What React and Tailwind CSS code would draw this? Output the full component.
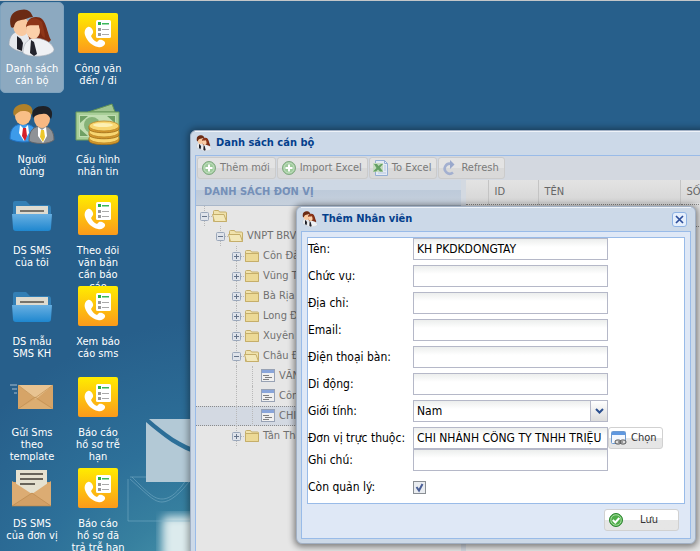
import React from 'react';

const FONT = "font-['DejaVu_Sans_Condensed','Noto_Sans',sans-serif]";

function Couple({ className }) {
  return (
    <svg viewBox="0 0 48 48" className={className} aria-hidden="true">
      <path d="M1 36C1 27 5 23 12 22l11 3 2 17c-9 3-19 0-24-6z" fill="#e6e9ed" stroke="#9aa3ad" strokeWidth=".6" />
      <path d="M9 27l4 3 2 4-1 8-5-2z" fill="#1d1e26" />
      <ellipse cx="13" cy="17" rx="8" ry="10" fill="#f9c9a0" transform="rotate(-8 13 17)" />
      <path d="M3 18C0 8 5 2 12 1c7-2 11 1 13 7-5 0-7 3-12 3-4 1-6 2-7 7-1 1-2 1-3 0z" fill="#6b2b14" />
      <path d="M19 23c-2-9 2-15 9-15 11 0 10 14 15 23l-5 5-16-4z" fill="#7a2a12" />
      <path d="M15 44c0-9 4-13 10-15 11 0 18 4 21 11 1 7-23 10-31 4z" fill="#eff1f4" stroke="#a6adb5" strokeWidth=".6" />
      <ellipse cx="25" cy="21" rx="7" ry="9" fill="#fbd0aa" transform="rotate(-6 25 21)" />
      <path d="M18 18c1-9 9-12 16-5 1 5 3 11 3 16-4-1-5-8-6-13-5 1-9-1-13 2z" fill="#8e3618" />
      <path d="M23 31l3 2 3 12-3 2-4-3z" fill="#24252e" />
    </svg>
  );
}

function Men() {
  return (
    <svg viewBox="0 0 48 42" className="h-[42px] w-12" aria-hidden="true">
      <path d="M2 36c0-12 5-15 14-15s13 5 13 15c-6 4-20 4-27 0z" fill="#3d9bea" stroke="#2273c4" />
      <path d="M12 22l4 4 4-4 1 8-5 8-5-8z" fill="#fff" />
      <path d="M15 25h3l1 8-2 5-3-5z" fill="#d3202a" />
      <ellipse cx="15" cy="13" rx="8" ry="9" fill="#f9bf86" />
      <path d="M6 13C3 5 10 1 16 1c7 0 10 5 8 11-3-4-6-4-9-4-4 0-6 2-9 5z" fill="#b0812a" />
      <path d="M21 38c0-11 5-15 13-15s12 5 12 14c-6 5-20 4-25 1z" fill="#8f9296" stroke="#63666b" />
      <path d="M30 24l4 3 4-3 1 9-4 7-5-7z" fill="#fff" />
      <path d="M33 27h3l1 7-2 5-3-5z" fill="#ecc72b" />
      <ellipse cx="34" cy="16" rx="8" ry="9" fill="#f8b883" />
      <path d="M25 15C22 6 29 3 35 3c8 0 11 6 8 13-3-5-5-6-9-5-4 0-6 1-9 4z" fill="#1f2126" />
    </svg>
  );
}

function Money() {
  return (
    <svg viewBox="0 0 48 42" className="h-[42px] w-12" aria-hidden="true">
      <path d="M14 9L38 1l3 8z" fill="#9fc490" stroke="#5f9156" />
      <path d="M2 9h43v28H2z" fill="#a9cf98" stroke="#69985c" />
      <path d="M5 12h37v22H5z" fill="#c2deb2" />
      <ellipse cx="18" cy="22" rx="8" ry="8" fill="#86b378" />
      <path d="M6 13h8l-8 7zM6 33h8l-8-7zM41 13h-8l8 7z" fill="#6fa064" />
      {[36, 30, 24].map((y) => (
        <g key={y}>
          <path d={`M15 ${y - 1}v3c2 5 28 5 30 0v-3z`} fill="#d69a2d" stroke="#9a6a17" strokeWidth=".8" />
          <ellipse cx="30" cy={y - 1} rx="15" ry="5" fill="#f8d670" stroke="#b98424" strokeWidth=".8" />
        </g>
      ))}
      <ellipse cx="29" cy="22" rx="10" ry="2" fill="#fdf0b3" />
    </svg>
  );
}

function Phone() {
  return (
    <svg viewBox="0 0 40 40" className="size-10" aria-hidden="true">
      <defs>
        <linearGradient id="phoneBg" x1="0" y1="0" x2="0" y2="1">
          <stop offset="0" stopColor="#ffec00" />
          <stop offset="1" stopColor="#fc9a1b" />
        </linearGradient>
      </defs>
      <rect width="40" height="40" rx="2" fill="url(#phoneBg)" />
      <path d="M10 14c-3 1-4 5-3 8 2 6 7 11 13 12 3 1 6-1 7-3 1-3-4-5-6-4l-2 2c-3-1-5-4-6-6l2-3c1-2-2-7-5-6z" fill="#fff" />
      <rect x="18" y="7" width="15" height="18" rx="1.500" fill="#fff" />
      <path d="M20 9h3v3h-3z" fill="#27ae49" />
      <path d="M24 10h7v1.500h-7z" fill="#3bb75a" />
      <path d="M20 15h3v3h-3zM20 20h3v3h-3z" fill="#999" />
      <path d="M24 16h7v1h-7zM24 21h7v1h-7z" fill="#aaa" />
    </svg>
  );
}

function BlueFolder() {
  return (
    <svg viewBox="0 0 40 31" className="h-[31px] w-10" aria-hidden="true">
      <defs>
        <linearGradient id="folderFace" x1="0" y1="0" x2="0" y2="1">
          <stop offset="0" stopColor="#69b0e2" />
          <stop offset="1" stopColor="#1f87cf" />
        </linearGradient>
      </defs>
      <path d="M1 3q0-2 2-2h11l4 4h18q3 0 3 3v14H1z" fill="#337fb5" />
      <path d="M4 6h32v10H4z" fill="#dedbd0" />
      <path d="M8 10h24v2H8z" fill="#77736b" />
      <path d="M0 14h40l-1 14q0 3-3 3H4q-3 0-3-3z" fill="url(#folderFace)" />
    </svg>
  );
}

function SendMail() {
  return (
    <svg viewBox="0 0 44 26" className="h-[26px] w-11" aria-hidden="true">
      <path d="M0 1h7M2 5h5M4 9h3" stroke="#a9bfce" />
      <path d="M8 1h35v24H8z" fill="#dcae72" />
      <path d="M8 1l17 14L8 25z" fill="#d6a467" />
      <path d="M43 1L26 15l17 10z" fill="#d6a467" />
      <path d="M8 1h35L26 15z" fill="#e8c391" />
      <path d="M8 25l17-12 18 12M8 1l17 13L43 1" fill="none" stroke="#c08f52" strokeWidth=".7" />
    </svg>
  );
}

function OpenMail() {
  return (
    <svg viewBox="0 0 40 38" className="h-[38px] w-10" aria-hidden="true">
      <path d="M0 13h39v24H0z" fill="#cf9c62" />
      <path d="M4 1h31v23H4z" fill="#e5e1d0" />
      <path d="M8 5h23M8 10h23M8 15h15" stroke="#3f3b33" strokeWidth="1.400" />
      <path d="M0 12l20 13L0 37z" fill="#dcac73" />
      <path d="M39 12L20 25l19 12z" fill="#dcac73" />
      <path d="M0 37l20-13 19 13z" fill="#d3a066" stroke="#b9864c" strokeWidth=".6" />
    </svg>
  );
}

const shortcuts = [
  ['Danh sách cán bộ', 'couple'],
  ['Công văn đến / đi', 'phone'],
  ['Người dùng', 'men'],
  ['Cấu hình nhắn tin', 'money'],
  ['DS SMS của tôi', 'folder'],
  ['Theo dõi văn bản cần báo cáo', 'phone'],
  ['DS mẫu SMS KH', 'folder'],
  ['Xem báo cáo sms', 'phone'],
  ['Gửi Sms theo template', 'send'],
  ['Báo cáo hồ sơ trễ hạn', 'phone'],
  ['DS SMS của đơn vị', 'open'],
  ['Báo cáo hồ sơ đã trả trễ hạn', 'phone'],
];

const shortcutIcons = {
  couple: <Couple className="size-12" />,
  phone: <Phone />,
  men: <Men />,
  money: <Money />,
  folder: <BlueFolder />,
  send: <SendMail />,
  open: <OpenMail />,
};

function Wallpaper() {
  return (
    <svg className="absolute bottom-0 left-[120px] h-[151px] w-20" viewBox="0 0 80 151" aria-hidden="true">
      <defs>
        <filter id="soft"><feGaussianBlur stdDeviation="5" /></filter>
      </defs>
      <rect x="42" y="116" width="60" height="50" rx="6" fill="#dcebed" filter="url(#soft)" />
      <path d="M8 79v42h72M10 77h70M10 79C28 95 34 102 42 102s18-8 30-24M12 77c16 16 22 22 30 22s16-6 26-22" fill="none" stroke="#82b3cb" strokeOpacity=".5" />
      <path d="M26 22v60h54V55C60 50 42 36 26 22z" fill="#b3c9d6" />
      <path d="M29 19h51v31C62 46 44 32 29 19z" fill="#b3c9d6" />
    </svg>
  );
}

function Add() {
  return (
    <svg viewBox="0 0 16 16" className="size-4" aria-hidden="true">
      <circle cx="8" cy="8" r="6.500" fill="#9fcb9c" stroke="#80a880" />
      <circle cx="8" cy="8" r="5" fill="none" stroke="#c3dfc1" />
      <path d="M8 4.500v7M4.500 8h7" stroke="#fff" strokeWidth="2" />
    </svg>
  );
}

function Excel() {
  return (
    <svg viewBox="0 0 16 16" className="size-4" aria-hidden="true">
      <path d="M2.500.500h9l3 3v12h-12z" fill="#e4eaf4" stroke="#94aed4" />
      <path d="M11.500.500v3h3" fill="none" stroke="#94aed4" />
      <path d="M11 6h2M11 8h2M11 10h2M5 13h8" stroke="#b7c8e0" />
      <path d="M0 3h10v9H0z" fill="#c6dbc0" />
      <path d="M1 4h3l1.500 2L8 4h2L7 7.500l3 4H7L5 9.500 3 11.500H0L3.500 8z" fill="#64a063" />
    </svg>
  );
}

function Refresh() {
  return (
    <svg viewBox="0 0 16 16" className="size-4" aria-hidden="true">
      <path d="M11 12.500A5 5 0 1 1 9.500 4" fill="none" stroke="#a3b0d0" strokeWidth="2.600" />
      <path d="M8 0l4.500 4.500L8 9z" fill="#99a8cc" />
    </svg>
  );
}

function ToolButton({ icon, label }) {
  return (
    <button className="flex h-[22px] items-center gap-[3px] rounded-[3px] border border-[#cbcbcb] bg-linear-to-b from-[#e3e3e3] from-50% to-[#d9d9d9] to-50% pr-[5px] pl-[3px] text-[11px] text-[#7a7a7a]">
      {icon}
      <span>{label}</span>
    </button>
  );
}

function Toggle({ open }) {
  return (
    <svg viewBox="0 0 16 20" className="h-5 w-4 shrink-0" aria-hidden="true">
      <path d="M8.500 0v6M8.500 15v5M13 10.500h3" stroke="#b9b9b9" strokeDasharray="1 1" />
      <rect x="4.500" y="6.500" width="8" height="8" rx="1" fill="#dfe3ea" stroke="#9aa7ba" />
      <path d={open ? 'M6 10.500h5' : 'M6 10.500h5M8.500 8v5'} stroke="#66748a" />
    </svg>
  );
}

function TreeFolder({ open }) {
  return (
    <svg viewBox="0 0 16 16" className="size-4 shrink-0" aria-hidden="true">
      <path d="M1.500 13.500v-10q0-1 1-1h4l1 1.500h6q1 0 1 1v8.500z" fill="#f0e2ac" stroke="#c5ae6a" />
      {open
        ? <path d="M2.500 13.500l-2-7h11.500l2.500 7z" fill="#f3e8b9" stroke="#c5ae6a" />
        : <path d="M1.500 5.500h13v8h-13z" fill="#ecd996" stroke="#c5ae6a" />}
    </svg>
  );
}

function Leaf() {
  return (
    <svg viewBox="0 0 16 14" className="h-3.5 w-4 shrink-0" aria-hidden="true">
      <rect x="1.500" y=".500" width="13" height="12" fill="#f0f0f0" stroke="#98a2b4" />
      <path d="M2 1h12v3H2z" fill="#89a5da" />
      <path d="M3 6.500h6M5 8.500h7M3 10.500h6" stroke="#808080" />
    </svg>
  );
}

const Guide = () => <span className="ml-2 h-5 w-2 shrink-0 border-l border-dotted border-[#b9b9b9]" />;

const tree = [
  { depth: 0, label: '', open: true },
  { depth: 1, label: 'VNPT BRVT', open: true },
  { depth: 2, label: 'Côn Đảo' },
  { depth: 2, label: 'Vũng Tàu' },
  { depth: 2, label: 'Bà Rịa' },
  { depth: 2, label: 'Long Điền' },
  { depth: 2, label: 'Xuyên Mộc' },
  { depth: 2, label: 'Châu Đức', open: true },
  { depth: 3, label: 'VĂN PHÒNG', leaf: true },
  { depth: 3, label: 'Công ty', leaf: true },
  { depth: 3, label: 'CHI NHÁNH', leaf: true, selected: true },
  { depth: 2, label: 'Tân Thành' },
];

function TreeRow({ depth, label, open, leaf, selected }) {
  return (
    <li className={`flex h-5 items-center text-[11px] whitespace-nowrap text-[#707070] ${selected ? 'border-y border-dotted border-[#8b8b8b] bg-[#d3d9e2]' : ''}`}>
      {depth > 0 && <span className="w-4 shrink-0" />}
      {depth > 1 && <span className="w-4 shrink-0" />}
      {leaf ? (
        <>
          <Guide />
          <Guide />
          <Leaf />
        </>
      ) : (
        <>
          <Toggle open={open} />
          <TreeFolder open={open} />
        </>
      )}
      <span className="pl-[3px]">{label}</span>
    </li>
  );
}

function StaffWindow() {
  return (
    <section className="absolute top-[129px] -right-2 -bottom-2 left-[190px] flex flex-col rounded-md border border-[#a2b1c5] bg-[#ccd9e8] pl-1 shadow-[0_0_6px_2px_rgba(0,0,0,0.35)]">
      <header className="flex h-6 shrink-0 items-center gap-1 border-t border-[#eef3f9] pb-px pl-px">
        <Couple className="size-4" />
        <h1 className="text-[11px] font-bold text-[#04408c]">Danh sách cán bộ</h1>
      </header>
      <div className="flex flex-1 flex-col border-t border-l border-[#99bbe8] bg-[#e6e6e6]">
        <div className="flex h-6 shrink-0 items-center gap-px bg-[#d3d8e0] pl-px">
          <ToolButton icon={<Add />} label="Thêm mới" />
          <ToolButton icon={<Add />} label="Import Excel" />
          <ToolButton icon={<Excel />} label="To Excel" />
          <ToolButton icon={<Refresh />} label="Refresh" />
        </div>
        <div className="flex flex-1">
          <div className="w-[265px] shrink-0">
            <h2 className="flex h-[26px] items-center border-b border-[#a9b7c9] bg-linear-to-b from-[#ced8e4] from-40% via-[#bdcada] via-40% to-[#c6d0dc] pl-2 text-[11px] font-bold text-[#7590b8]">DANH SÁCH ĐƠN VỊ</h2>
            <ul>
              {tree.map((row) => <TreeRow key={row.label} {...row} />)}
            </ul>
          </div>
          <div className="w-[5px] shrink-0 bg-[#d3d9e1]" />
          <div className="flex-1">
            <table className="w-full table-fixed border-collapse text-left text-[11px] text-[#666]">
              <thead>
                <tr className="h-6 border-b border-dotted border-[#888] bg-linear-to-b from-[#e3e3e3] to-[#d6d6d6]">
                  <th className="w-[22px] border-r border-[#c4c4c4]" />
                  <th className="w-[50px] border-r border-[#c4c4c4] pl-1.5 font-normal">ID</th>
                  <th className="w-[142px] border-r border-[#c4c4c4] pl-1.5 font-normal">TÊN</th>
                  <th className="overflow-hidden pl-1.5 font-normal whitespace-nowrap">SỐ</th>
                </tr>
              </thead>
              <tbody>
                <tr className="h-[22px] border-b border-dotted border-[#888]">
                  <td /><td /><td /><td />
                </tr>
              </tbody>
            </table>
          </div>
        </div>
      </div>
    </section>
  );
}

const field = 'h-[22px] w-[195px] border border-[#b5b8c8] bg-white bg-linear-to-b from-[#eceeed] to-white to-40% px-[3px] text-[12px] text-black';

function Row({ id, label, children, tight }) {
  return (
    <div className={`flex h-[22px] items-center ${tight ? '' : 'mb-[5px]'}`}>
      <label htmlFor={id} className="w-[105px] shrink-0 whitespace-nowrap">{label}</label>
      {children}
    </div>
  );
}

function EmployeeDialog() {
  return (
    <section role="dialog" aria-labelledby="dialog-title" className="absolute top-[205px] left-[296px] w-[400px] rounded-md border border-[#a2b1c5] bg-[#ccd9e8] px-1 pb-1 shadow-[0_1px_6px_2px_rgba(0,0,0,0.45)]">
      <header className="flex h-6 items-center gap-1 border-t border-[#eef3f9] pr-1 pb-px pl-px">
        <Couple className="size-4" />
        <h2 id="dialog-title" className="flex-1 text-[11px] font-bold text-[#04408c]">Thêm Nhân viên</h2>
        <button aria-label="Đóng" className="flex size-[15px] items-center justify-center rounded-[3px] border border-[#8fb3e3] bg-[#e5effc]">
          <svg viewBox="0 0 9 9" className="size-[9px]" aria-hidden="true"><path d="M1 1l7 7M8 1L1 8" stroke="#2e4f9b" strokeWidth="1.700" /></svg>
        </button>
      </header>
      <form className="border border-[#99bbe8] bg-[#dfe8f6] p-[5px]" onSubmit={(e) => e.preventDefault()}>
        <div className="h-[267px] border border-[#99bbe8] bg-white text-[12px] text-black">
          <Row id="ten" label="Tên:"><input id="ten" defaultValue="KH PKDKDONGTAY" className={field} /></Row>
          <Row id="chucvu" label="Chức vụ:"><input id="chucvu" className={field} /></Row>
          <Row id="diachi" label="Địa chỉ:"><input id="diachi" className={field} /></Row>
          <Row id="email" label="Email:"><input id="email" className={field} /></Row>
          <Row id="dienthoai" label="Điện thoại bàn:"><input id="dienthoai" className={field} /></Row>
          <Row id="didong" label="Di động:"><input id="didong" className={field} /></Row>
          <Row id="gioitinh" label="Giới tính:">
            <div className="relative">
              <select id="gioitinh" className={`${field} block appearance-none`}>
                <option>Nam</option>
                <option>Nữ</option>
              </select>
              <span className="pointer-events-none absolute inset-y-0 right-0 flex w-[18px] items-center justify-center border border-[#b5b8c8] bg-linear-to-b from-white to-[#dcdcdc]">
                <svg viewBox="0 0 9 6" className="h-1.5 w-[9px]" aria-hidden="true"><path d="M1 1l3.500 3.500L8 1" fill="none" stroke="#2b4f8f" strokeWidth="2" /></svg>
              </span>
            </div>
          </Row>
          <Row id="donvi" label="Đơn vị trực thuộc:" tight>
            <input id="donvi" defaultValue="CHI NHÁNH CÔNG TY TNHH TRIỆU" className={field} />
            <button type="button" className="flex h-[22px] w-[55px] items-center gap-1 rounded-[3px] border border-[#d1d1d1] bg-linear-to-b from-white from-50% to-[#e6e6e6] to-50% pl-0.5 text-[11px] text-[#333]">
              <svg viewBox="0 0 16 16" className="size-4 shrink-0" aria-hidden="true">
                <rect x=".500" y="1.500" width="14" height="12" rx="1" fill="#f4f8fe" stroke="#6d9ad0" />
                <path d="M1 2h13v3H1z" fill="#5f98e0" />
                <rect x="4" y="10" width="6" height="4" rx="2" fill="#ddd" stroke="#555" />
                <rect x="9" y="10" width="6" height="4" rx="2" fill="#ddd" stroke="#555" />
                <path d="M7 12h5" stroke="#555" />
              </svg>
              Chọn
            </button>
          </Row>
          <Row id="ghichu" label="Ghi chú:"><input id="ghichu" className={field} /></Row>
          <Row id="quanly" label="Còn quản lý:">
            <span className="relative block size-[13px]">
              <input id="quanly" type="checkbox" defaultChecked className="block size-[13px] appearance-none border border-[#8a8f94] bg-[#e9ecf0]" />
              <svg viewBox="0 0 13 13" className="pointer-events-none absolute inset-0" aria-hidden="true"><path d="M3.500 6l2.500 3.500L9.500 3" fill="none" stroke="#4a5f97" strokeWidth="2" /></svg>
            </span>
          </Row>
        </div>
        <div className="flex justify-end pt-[5px] pr-1.5 pb-0.5">
          <button className="flex h-[22px] w-[75px] items-center rounded-[3px] border border-[#d1d1d1] bg-linear-to-b from-white from-50% to-[#e6e6e6] to-50% pr-1 pl-[3px] text-[11px] text-[#333]">
            <svg viewBox="0 0 16 16" className="size-4" aria-hidden="true">
              <circle cx="8" cy="8" r="6.500" fill="#4fae49" stroke="#2c8430" />
              <circle cx="8" cy="8" r="5.200" fill="none" stroke="#a6dba0" />
              <path d="M4.800 8l2.500 2.500 4-4.500" fill="none" stroke="#fff" strokeWidth="2" />
            </svg>
            <span className="flex-1">Lưu</span>
          </button>
        </div>
      </form>
    </section>
  );
}

export default function App() {
  return (
    <main className={`relative h-screen overflow-hidden border-t border-[#c3c6c8] bg-[#275f8b] bg-[radial-gradient(circle_at_210px_620px,#55a5b5_0px,#37809f_110px,#2d7099_180px,#275f8b_300px)] ${FONT}`}>
      <Wallpaper />
      <nav className="relative grid w-[132px] grid-cols-2 pt-px">
        {shortcuts.map(([label, icon], i) => (
          <button key={label} className={`flex h-[91px] w-16 flex-col items-center rounded-[5px] border text-center text-[11px] leading-3 text-white ${i === 0 ? 'border-[#7fa3be] bg-[#8ca9c0]' : 'border-transparent'}`}>
            <span className="flex h-[60px] shrink-0 items-center">{shortcutIcons[icon]}</span>
            <span className="w-[54px]">{label}</span>
          </button>
        ))}
      </nav>
      <StaffWindow />
      <EmployeeDialog />
    </main>
  );
}
